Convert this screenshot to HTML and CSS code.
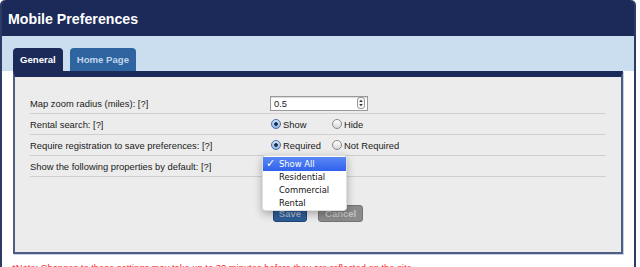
FILE: index.html
```html
<!DOCTYPE html>
<html>
<head>
<meta charset="utf-8">
<title>Mobile Preferences</title>
<link rel="stylesheet" href="styles.css">
</head>
<body>
<div class="frame">
  <div class="titlebar"><h1>Mobile Preferences</h1></div>
  <div class="tabstrip">
    <div class="tab active">General</div>
    <div class="tab">Home Page</div>
  </div>
  <div class="panelwrap">
    <div class="panel">
      <div class="rows">
        <div class="row">
          <div class="label">Map zoom radius (miles): [?]</div>
          <div class="num"><span>0.5</span>
            <svg class="stepper" width="8" height="12" viewBox="0 0 8 12"><rect x="0.5" y="0.5" width="7" height="11" rx="2.5" fill="#f6f6f6" stroke="#9a9a9a"/><path d="M2.2 5 L4 2.8 L5.8 5Z M2.2 7 L4 9.2 L5.8 7Z" fill="#333"/></svg>
          </div>
        </div>
        <div class="row">
          <div class="label">Rental search: [?]</div>
          <div class="opts">
            <div class="opt"><span class="radio on"></span>Show</div>
            <div class="opt"><span class="radio"></span>Hide</div>
          </div>
        </div>
        <div class="row">
          <div class="label">Require registration to save preferences: [?]</div>
          <div class="opts">
            <div class="opt"><span class="radio on"></span>Required</div>
            <div class="opt"><span class="radio"></span>Not Required</div>
          </div>
        </div>
        <div class="row">
          <div class="label">Show the following properties by default: [?]</div>
        </div>
      </div>
      <div class="buttons">
        <div class="btn save">Save</div>
        <div class="btn cancel">Cancel</div>
      </div>
      <div class="menu">
        <div class="item sel"><span class="check">✓</span>Show All</div>
        <div class="item">Residential</div>
        <div class="item">Commercial</div>
        <div class="item">Rental</div>
      </div>
    </div>
  </div>
  <p class="note">*Note: Changes to these settings may take up to 30 minutes before they are reflected on the site.</p>
</div>
</body>
</html>
```
FILE: styles.css
```css
* { box-sizing: border-box; }
html, body { margin: 0; padding: 0; background: #fff; }
body {
  font-family: "Liberation Sans", Arial, sans-serif;
  font-size: 9.4px;
  color: #1a1a1a;
  width: 640px;
  height: 267px;
  overflow: hidden;
}
.frame {
  width: 636px;
  height: 300px;
  border-left: 2px solid #2b3b66;
  border-right: 2px solid #2b3b66;
  border-radius: 5px 5px 0 0;
  background: #fff;
}
.titlebar {
  height: 36px;
  background: #1b2a58;
  border-radius: 4px 4px 0 0;
  padding: 2px 0 0 6px;
}
.titlebar h1 {
  margin: 0;
  font-size: 14.2px;
  line-height: 34px;
  color: #fff;
  font-weight: bold;
}
.tabstrip {
  height: 35px;
  background: #cbdef0;
  display: flex;
  align-items: flex-end;
  gap: 7px;
  padding-left: 11px;
}
.tab {
  height: 23px;
  padding: 0 7px;
  border-radius: 4px 4px 0 0;
  font-weight: bold;
  font-size: 9.6px;
  line-height: 23px;
  background: #2e64a0;
  color: #c3d5ea;
}
.tab.active { background: #1b2a58; color: #fff; }
.panelwrap { padding: 0 11px; }
.panel {
  position: relative;
  border-top: 6px solid #1b2a58;
  border-left: 2px solid #4e5e82;
  border-right: 2px solid #4e5e82;
  border-bottom: 2px solid #4e5e82;
  background: #ececec;
  padding: 16px 15px 30px;
  box-shadow: 1px 1px 0 #c9d2e4;
}
.row {
  display: flex;
  align-items: center;
  height: 21px;
  border-bottom: 1px solid #cfcfcf;
}
.label { width: 240px; }
.num {
  width: 98px;
  height: 15px;
  border: 1px solid #9a9a9a;
  background: #fff;
  display: flex;
  align-items: center;
  padding-left: 3px;
  box-shadow: inset 0 1px 1px rgba(0,0,0,.15);
}
.stepper { margin-left: auto; margin-right: 2px; display: block; }
.opts { display: flex; align-items: center; }
.opt { display: flex; align-items: center; gap: 2px; }
.opt:first-child { width: 61px; }
.radio {
  width: 10px;
  height: 10px;
  border-radius: 50%;
  border: 1px solid #8a8a8a;
  background: linear-gradient(#ffffff, #d8d8d8);
  margin-left: 1px;
}
.radio.on {
  border-color: #4d6d9c;
  background: radial-gradient(circle, #1e2e48 0 1.5px, transparent 2.2px), linear-gradient(#cfe4fb, #8db6ea);
}
.buttons {
  display: flex;
  justify-content: center;
  gap: 11px;
  margin-top: 28px;
}
.btn {
  height: 17px;
  padding: 0 5px;
  border-radius: 3px;
  font-weight: bold;
  font-size: 9.5px;
  line-height: 15px;
}
.save { background: #2d5d97; border: 1px solid #1f4575; color: #9fb2cc; }
.cancel { background: #8b8b8b; border: 1px solid #747474; color: #c6c6c6; padding: 0 6px; }
.menu {
  position: absolute;
  left: 247px;
  top: 78px;
  width: 85px;
  height: 56px;
  background: #fff;
  border: 1px solid rgba(0,0,0,.12);
  border-radius: 4px;
  box-shadow: 0 3px 8px rgba(0,0,0,.3);
  padding-top: 1px;
  font-family: "DejaVu Sans", sans-serif;
  font-size: 8.4px;
  color: #111;
}
.item {
  height: 13px;
  line-height: 13px;
  padding-left: 16px;
  position: relative;
}
.item.sel {
  height: 14px;
  line-height: 14px;
  background: linear-gradient(#5b88f6, #2f61ec);
  color: #fff;
}
.check {
  position: absolute;
  left: 3px;
  top: 0;
  font-size: 11px;
  font-weight: bold;
  line-height: 14px;
}
.note {
  margin: 8px 0 0 10px;
  color: #ff1f2a;
  font-size: 9.4px;
}
```
